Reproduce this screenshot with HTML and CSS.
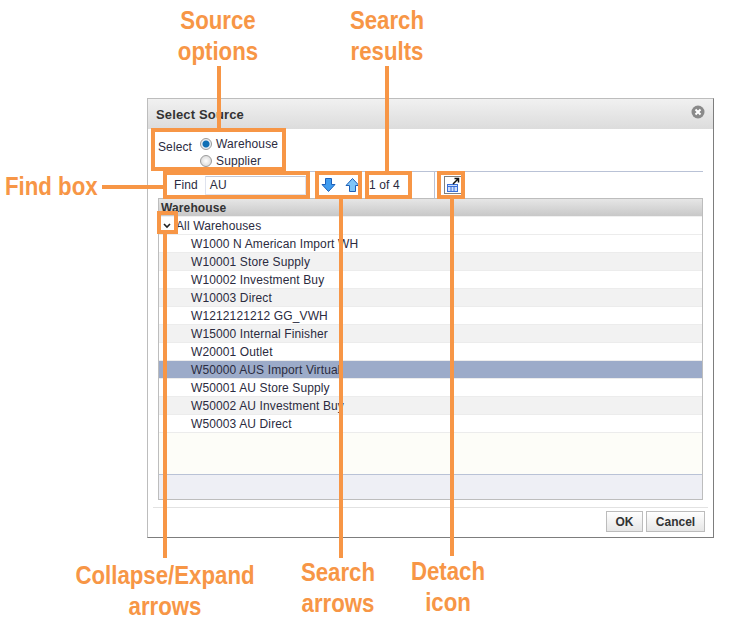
FILE: index.html
```html
<!DOCTYPE html>
<html lang="en">
<head>
<meta charset="utf-8">
<title>Select Source</title>
<link rel="stylesheet" href="styles.css">
</head>
<body>
<div class="canvas">
  <section class="dialog">
    <header class="title-bar">
      <h1 class="title">Select Source</h1>
      <svg class="close" width="14" height="14" viewBox="0 0 14 14"><circle cx="7" cy="7" r="6.500" fill="#8a8a8a"/><path d="M4.500 4.500l5 5M9.500 4.500l-5 5" stroke="#fff" stroke-width="2"/></svg>
    </header>
    <div class="select-row">
      <span class="select-label">Select</span>
      <div class="radios">
        <div class="radio-row"><span class="radio radio-on"></span>Warehouse</div>
        <div class="radio-row"><span class="radio"></span>Supplier</div>
      </div>
    </div>
    <div class="toolbar">
      <div class="find">
        <span class="find-label">Find</span>
        <span class="find-input">AU</span>
      </div>
      <div class="arrows">
        <svg width="15" height="16" viewBox="0 0 15 16"><path d="M4.500 1.500h6v6h3.500l-6.500 7-6.500-7h3.500z" fill="#3f9cf0" stroke="#1c5fb8"/></svg>
        <svg width="15" height="16" viewBox="0 0 15 16"><path d="M4.500 14.500h6v-6h3.500l-6.500-7-6.500 7h3.500z" fill="#7fc6f8" stroke="#1c5fb8"/></svg>
      </div>
      <div class="count">1 of 4</div>
      <div class="detach">
        <svg class="detach-icon" width="18" height="18" viewBox="0 0 18 18">
          <rect x="0.500" y="0.500" width="17" height="17" fill="#fff" stroke="#000" stroke-dasharray="1 1"/>
          <rect x="3.500" y="8.500" width="10" height="7" fill="#cfe0fb" stroke="#3a6fd8"/>
          <path d="M3 10.500h11M7 10v6M10 10v6" stroke="#3a6fd8"/>
          <path d="M9 8l5-5M10.500 2.500h4v4" fill="none" stroke="#111" stroke-width="1.500"/>
        </svg>
      </div>
    </div>
    <div class="table">
      <div class="table-head">Warehouse</div>
      <div class="rows">
        <div class="row row-root">
          <svg class="chevron" width="8" height="6" viewBox="0 0 8 6"><path d="M1 1l3 3 3-3" fill="none" stroke="#222" stroke-width="1.600"/></svg>
          All Warehouses
        </div>
        <div class="row">W1000 N American Import WH</div>
        <div class="row row-alt">W10001 Store Supply</div>
        <div class="row">W10002 Investment Buy</div>
        <div class="row row-alt">W10003 Direct</div>
        <div class="row">W1212121212 GG_VWH</div>
        <div class="row row-alt">W15000 Internal Finisher</div>
        <div class="row">W20001 Outlet</div>
        <div class="row row-selected">W50000 AUS Import Virtual</div>
        <div class="row">W50001 AU Store Supply</div>
        <div class="row row-alt">W50002 AU Investment Buy</div>
        <div class="row">W50003 AU Direct</div>
      </div>
      <div class="table-empty"></div>
      <div class="table-foot"></div>
    </div>
    <footer class="dialog-foot">
      <button class="btn btn-ok" type="button">OK</button>
      <button class="btn btn-cancel" type="button">Cancel</button>
    </footer>
  </section>

  <div class="box box-source"></div>
  <div class="box box-find"></div>
  <div class="box box-arrows"></div>
  <div class="box box-results"></div>
  <div class="box box-detach"></div>
  <div class="box box-collapse"></div>

  <div class="line line-source"></div>
  <div class="line line-results"></div>
  <div class="line line-find"></div>
  <div class="line line-collapse"></div>
  <div class="line line-arrows"></div>
  <div class="line line-detach"></div>

  <div class="note note-source">Source<br>options</div>
  <div class="note note-results">Search<br>results</div>
  <div class="note note-find">Find box</div>
  <div class="note note-collapse">Collapse/Expand<br>arrows</div>
  <div class="note note-arrows">Search<br>arrows</div>
  <div class="note note-detach">Detach<br>icon</div>
</div>
</body>
</html>
```

FILE: styles.css
```css
html, body { margin: 0; padding: 0; background: #fff; }
.canvas {
  position: relative;
  width: 735px;
  height: 633px;
  overflow: hidden;
  padding: 98px 0 0 147px;
  box-sizing: border-box;
  font-family: "Liberation Sans", Arial, sans-serif;
  font-size: 12px;
  letter-spacing: 0.12px;
  color: #2b2b40;
}
.dialog {
  width: 567px;
  height: 440px;
  box-sizing: border-box;
  border: 1px solid #bdbdbd;
  border-right-color: #7d7d7d;
  border-bottom-color: #7d7d7d;
  display: flex;
  flex-direction: column;
}
.title-bar {
  height: 30px;
  flex: none;
  box-sizing: border-box;
  display: flex;
  align-items: center;
  justify-content: space-between;
  padding: 1px 8px 0;
  background: linear-gradient(#f1f1f1, #dcdcdc);
}
.title { margin: 0; font-size: 13px; font-weight: bold; color: #333; letter-spacing: 0.15px; }
.close { display: block; margin-top: -5px; }
.select-row {
  height: 42px;
  flex: none;
  display: flex;
  gap: 8px;
  padding-left: 10px;
  box-sizing: border-box;
}
.select-label { padding-top: 11px; }
.radios { padding-top: 6px; }
.radio-row { display: flex; align-items: center; gap: 4px; height: 17px; }
.radio {
  width: 10px;
  height: 10px;
  border-radius: 50%;
  border: 1px solid #9a9a9a;
  background: radial-gradient(circle, #fff, #d0d0d0);
}
.radio-on { background: radial-gradient(circle, #0f6fb5 0 3px, #e8eef4 4px); }
.toolbar {
  height: 26px;
  flex: none;
  margin: 0 10px 0 15px;
  border-top: 1px solid #b9c2d6;
  display: flex;
  align-items: center;
}
.find { display: flex; align-items: center; width: 152px; flex: none; padding-left: 11px; gap: 7px; box-sizing: border-box; }
.find-input {
  width: 95px;
  height: 17px;
  line-height: 17px;
  padding-left: 4px;
  border: 1px solid #dfe3ee;
  border-top-color: #c4c9d6;
}
.arrows { display: flex; gap: 9px; width: 50px; flex: none; padding-left: 6px; box-sizing: border-box; }
.count { width: 69px; flex: none; padding-left: 4px; box-sizing: border-box; }
.detach {
  height: 100%;
  border-left: 1px solid #b9c2d6;
  padding-left: 9px;
  display: flex;
  align-items: center;
}
.detach-icon { display: block; }
.table {
  margin: 0 10px;
  height: 302px;
  flex: none;
  box-sizing: border-box;
  border: 1px solid #bdbdbd;
  display: flex;
  flex-direction: column;
}
.table-head {
  height: 17px;
  flex: none;
  line-height: 18px;
  padding-left: 2px;
  font-weight: bold;
  color: #333;
  background: linear-gradient(#e6e6e6, #c8c8c8);
  border-bottom: 1px solid #f0f0f0;
}
.row {
  height: 18px;
  box-sizing: border-box;
  line-height: 19px;
  padding-left: 32px;
  border-bottom: 1px solid #ececec;
  background: #fff;
}
.row-root { padding-left: 17px; position: relative; }
.chevron { position: absolute; left: 4px; top: 6px; }
.row-alt { background: #f2f2f2; }
.row-selected { background: #9cabc9; }
.table-empty { flex: 1; background: #fdfdf8; }
.table-foot { height: 24px; flex: none; background: #eeeff5; border-top: 1px solid #b9c2d6; }
.dialog-foot {
  margin: 7px 5px 0;
  border-top: 1px solid #e2e2e2;
  display: flex;
  justify-content: flex-end;
  gap: 3px;
  padding-top: 3px;
  padding-right: 3px;
}
.btn {
  height: 21px;
  padding: 0;
  font-family: inherit;
  font-size: 12px;
  font-weight: bold;
  color: #333;
  background: linear-gradient(#fff, #e6e6e6);
  border: 1px solid #bcbcbc;
}
.btn-ok { width: 37px; }
.btn-cancel { width: 59px; }

.box { position: absolute; box-sizing: border-box; border: 4px solid #f79646; }
.box-source { left: 151px; top: 128px; width: 135px; height: 43px; }
.box-find { left: 163px; top: 171px; width: 147px; height: 28px; }
.box-arrows { left: 315px; top: 171px; width: 47px; height: 28px; }
.box-results { left: 365px; top: 171px; width: 47px; height: 28px; }
.box-detach { left: 437px; top: 171px; width: 28px; height: 28px; }
.box-collapse { left: 157px; top: 211px; width: 21px; height: 23px; }

.line { position: absolute; background: #f79646; }
.line-source { left: 217px; top: 66px; width: 4px; height: 62px; }
.line-results { left: 385px; top: 66px; width: 4px; height: 105px; }
.line-find { left: 102px; top: 185px; width: 61px; height: 4px; }
.line-collapse { left: 163px; top: 234px; width: 4px; height: 324px; }
.line-arrows { left: 339px; top: 199px; width: 4px; height: 359px; }
.line-detach { left: 450px; top: 199px; width: 4px; height: 357px; }

.note {
  position: absolute;
  font-weight: bold;
  font-size: 26px;
  line-height: 31px;
  letter-spacing: 0;
  color: #f79646;
  text-align: center;
  white-space: nowrap;
  transform: scaleX(0.855);
}
.note-source { left: 168px; width: 100px; top: 5px; }
.note-results { left: 337px; width: 100px; top: 5px; }
.note-find { left: 5px; top: 171px; transform-origin: left center; }
.note-collapse { left: 55px; width: 220px; top: 560px; }
.note-arrows { left: 288px; width: 100px; top: 557px; }
.note-detach { left: 398px; width: 100px; top: 556px; }
```
